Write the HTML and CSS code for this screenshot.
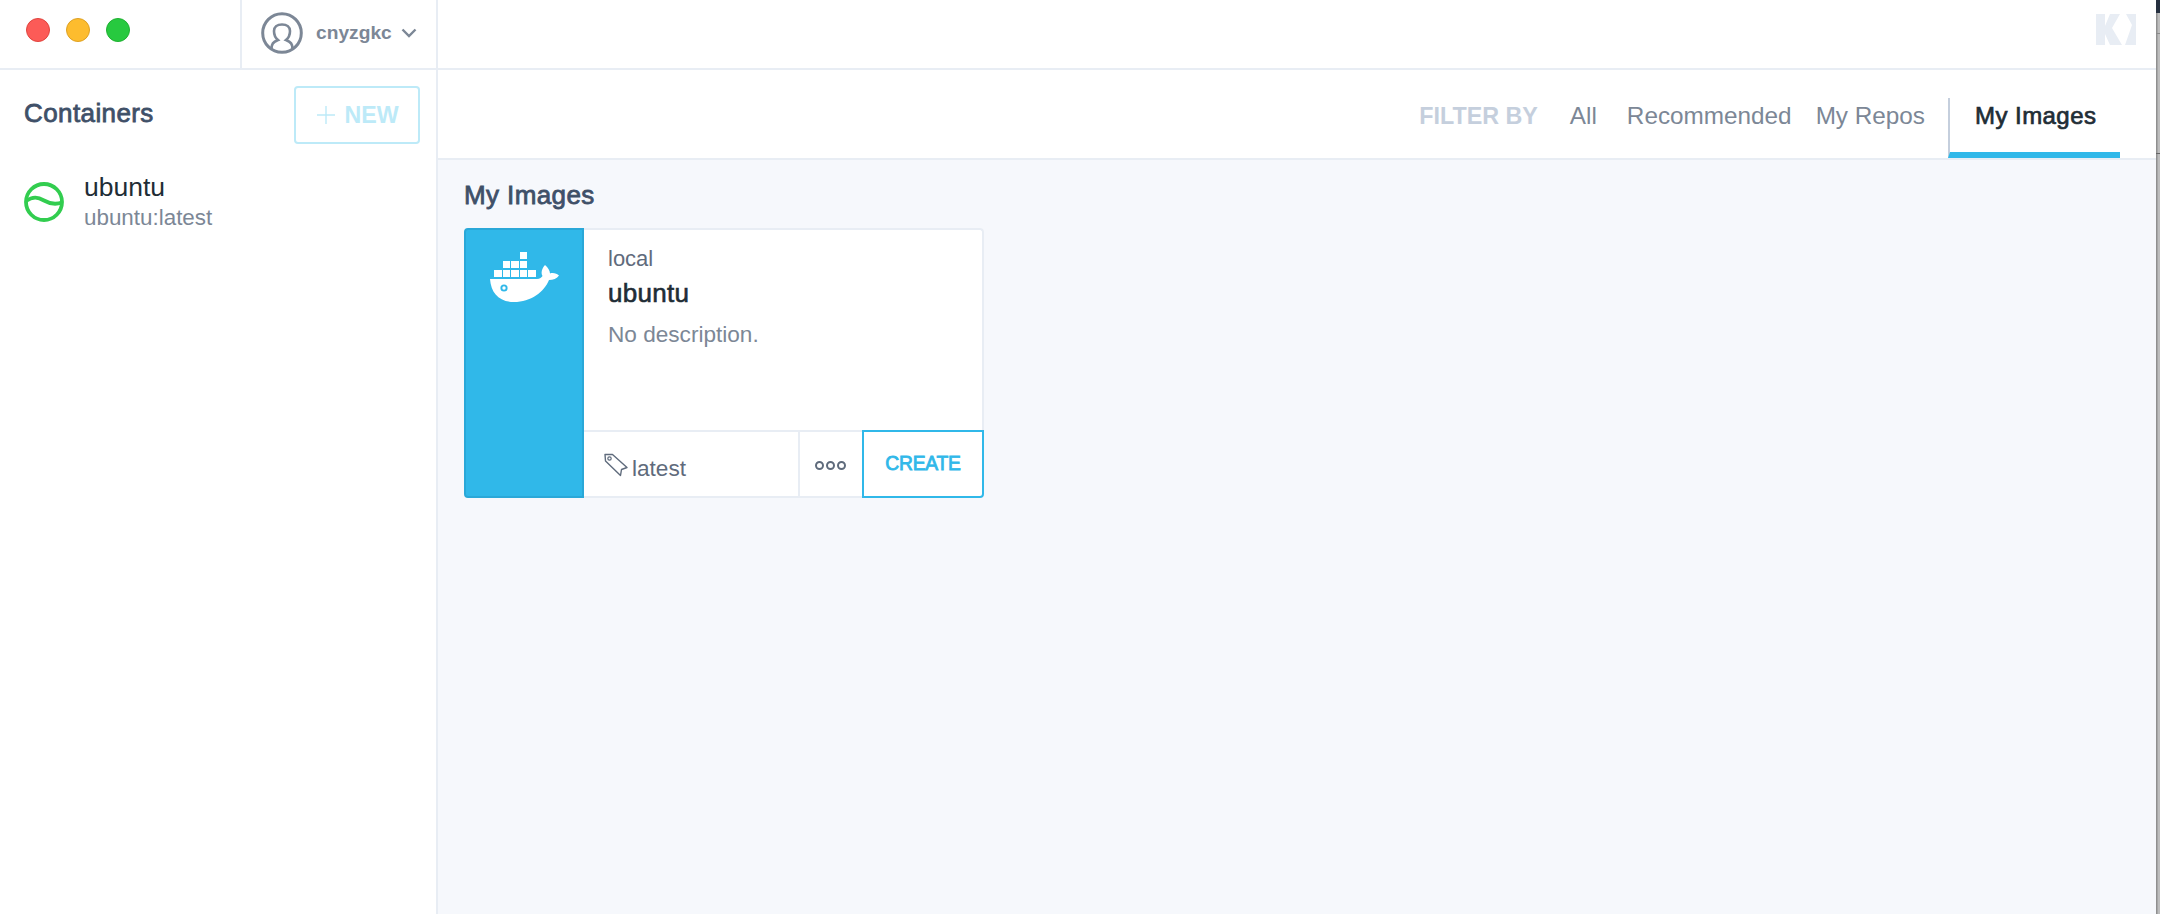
FILE: index.html
```html
<!DOCTYPE html>
<html lang="en">
<head>
<meta charset="utf-8">
<title>Kitematic</title>
<link rel="stylesheet" href="styles.css">
</head>
<body>
<div class="app">
  <header class="topbar">
    <div class="lights">
      <span class="light red"></span>
      <span class="light yellow"></span>
      <span class="light green"></span>
    </div>
    <div class="user">
      <svg class="avatar" viewBox="0 0 42 42" width="42" height="42">
        <circle cx="21" cy="21" r="19.3" fill="none" stroke="#7c8796" stroke-width="3"/>
        <path d="M10.5 37 C10.5 32 12 30 17 28 C14.5 26 13 23 13 19 C13 15 16 12.5 21 12.5 C26 12.5 29 15 29 19 C29 23 27.5 26 25 28 C30 30 31.5 32 31.5 37" fill="none" stroke="#7c8796" stroke-width="2.6"/>
      </svg>
      <span class="username">cnyzgkc</span>
      <svg class="chevron" viewBox="0 0 16 10" width="16" height="10">
        <path d="M1.5 1.5 L8 8 L14.5 1.5" fill="none" stroke="#7c8796" stroke-width="2.4"/>
      </svg>
    </div>
    <svg class="ki-logo" viewBox="0 0 40 31" width="40" height="31">
      <path d="M0 0 H9 V12 L14 0 H24 L16 14 L26 31 H14 L9 20 V31 H0 Z" fill="#e8edf4"/>
      <path d="M30 0 H40 V31 H29 L36 11 Z" fill="#e8edf4"/>
    </svg>
  </header>
  <div class="content">
    <aside class="sidebar">
      <div class="side-head">
        <h1 class="side-title">Containers</h1>
        <button class="new-btn">
          <svg viewBox="0 0 18 18" width="18" height="18">
            <path d="M9 0 V18 M0 9 H18" stroke="#bdeaf8" stroke-width="1.4" fill="none"/>
          </svg>
          <span>NEW</span>
        </button>
      </div>
      <div class="container-item">
        <svg class="status" viewBox="0 0 40 40" width="40" height="40">
          <circle cx="20" cy="20" r="18" fill="none" stroke="#32cd4f" stroke-width="3.8"/>
          <path d="M2 19 C9 14 14 15 20 18.5 C26 22 31 23 38 20.5" fill="none" stroke="#32cd4f" stroke-width="3.8"/>
        </svg>
        <div class="item-text">
          <div class="item-name">ubuntu</div>
          <div class="item-sub">ubuntu:latest</div>
        </div>
      </div>
    </aside>
    <main class="main">
      <nav class="tabs">
        <span class="filter-label">FILTER BY</span>
        <span class="tab tab-all">All</span>
        <span class="tab tab-rec">Recommended</span>
        <span class="tab tab-repos">My Repos</span>
        <span class="tab tab-active">My Images</span>
      </nav>
      <section class="results">
        <h2 class="results-title">My Images</h2>
        <article class="card">
          <div class="card-logo">
            <svg viewBox="0 0 80 60" width="80" height="60">
              <g fill="#fff">
                <rect x="36" y="5" width="7" height="7"/>
                <rect x="19" y="14" width="7" height="7"/>
                <rect x="27" y="14" width="8" height="7"/>
                <rect x="36" y="14" width="7" height="7"/>
                <rect x="10" y="23" width="8" height="7"/>
                <rect x="19" y="23" width="7" height="7"/>
                <rect x="27" y="23" width="8" height="7"/>
                <rect x="36" y="23" width="7" height="7"/>
                <rect x="44" y="23" width="8" height="7"/>
                <path d="M6 32 H53 C56 32 57.5 30.5 58.5 29 C56.5 26 58 21 61 18 C64 20.5 66 24 66 26.5 C69 25.5 73 26.5 75 28.5 C73 31.5 69 33 65 33 C60 45 47 55 30 55 C15 55 7 46 6 32 Z"/>
              </g>
              <circle cx="20" cy="41" r="3.6" fill="#30b8e9"/>
              <circle cx="20" cy="41" r="1.7" fill="#fff"/>
            </svg>
          </div>
          <div class="card-main">
            <div class="card-info">
              <div class="card-ns">local</div>
              <div class="card-name">ubuntu</div>
              <div class="card-desc">No description.</div>
            </div>
            <div class="card-foot">
              <div class="tag-cell">
                <svg viewBox="0 0 24 24" width="24" height="24">
                  <path d="M1 1.5 H8.5 L23 14.5 L17.5 16.5 L16.5 22.5 L1.5 8 Z" fill="none" stroke="#5f6b7c" stroke-width="1.4" stroke-linejoin="round"/>
                  <circle cx="5.5" cy="5.5" r="1.7" fill="none" stroke="#5f6b7c" stroke-width="1.2"/>
                </svg>
                <span class="tag-text">latest</span>
              </div>
              <div class="more-cell">
                <span class="dot"></span><span class="dot"></span><span class="dot"></span>
              </div>
              <div class="create-cell">CREATE</div>
            </div>
          </div>
        </article>
      </section>
    </main>
  </div>
  <div class="edge"></div>
</div>
</body>
</html>
```

FILE: styles.css
```css
* { box-sizing: border-box; }
html, body { margin: 0; padding: 0; }
body {
  font-family: "Liberation Sans", Arial, sans-serif;
  background: #fff;
  overflow: hidden;
}
.app {
  position: relative;
  width: 2160px;
  height: 914px;
  display: flex;
  flex-direction: column;
}
.topbar {
  height: 70px;
  flex: none;
  display: flex;
  align-items: stretch;
  border-bottom: 2px solid #e8edf4;
}
.lights {
  width: 242px;
  flex: none;
  display: flex;
  align-items: center;
  gap: 16px;
  padding: 0 0 8px 26px;
  border-right: 2px solid #e8edf4;
}
.light {
  width: 24px;
  height: 24px;
  border-radius: 50%;
  border: 1px solid;
}
.red { background: #fc5b57; border-color: #e0443e; }
.yellow { background: #fdbc2e; border-color: #dea123; }
.green { background: #27c93f; border-color: #1fb131; }
.user {
  width: 196px;
  flex: none;
  display: flex;
  align-items: center;
  padding: 0 0 2px 19px;
  border-right: 2px solid #e8edf4;
}
.avatar { flex: none; }
.username {
  margin-left: 13px;
  font-size: 19.2px;
  font-weight: 700;
  color: #7c8796;
}
.chevron { margin-left: 9px; flex: none; }
.ki-logo { margin: 14px 24px 0 auto; flex: none; }

.content { flex: 1; display: flex; min-height: 0; }
.sidebar {
  width: 438px;
  flex: none;
  border-right: 2px solid #e8edf4;
}
.side-head {
  display: flex;
  align-items: flex-start;
  justify-content: space-between;
  padding: 16px 16px 0 24px;
}
.side-title {
  margin: 12px 0 0;
  font-size: 26px;
  line-height: 30px;
  font-weight: 400;
  letter-spacing: 0.4px;
  -webkit-text-stroke: 0.8px #3f5068;
  color: #3f5068;
}
.new-btn {
  width: 126px;
  height: 58px;
  display: flex;
  align-items: center;
  justify-content: center;
  gap: 9px;
  padding: 0 0 0 2px;
  background: #fff;
  border: 2px solid #bdeaf8;
  border-radius: 4px;
  font-family: inherit;
  font-size: 23.2px;
  font-weight: 700;
  color: #bdeaf8;
}
.container-item {
  display: flex;
  align-items: center;
  gap: 20px;
  margin-top: 27px;
  padding-left: 24px;
}
.status { flex: none; }
.item-name {
  font-size: 26.5px;
  line-height: 32px;
  color: #1f2d36;
}
.item-sub {
  margin-top: 1px;
  font-size: 22.4px;
  line-height: 28px;
  color: #7c8796;
}

.main {
  flex: 1;
  min-width: 0;
  display: flex;
  flex-direction: column;
  background: #f6f8fc;
}
.tabs {
  height: 90px;
  flex: none;
  display: flex;
  align-items: stretch;
  justify-content: flex-end;
  padding: 28px 40px 0 0;
  background: #fff;
  border-bottom: 2px solid #e8edf4;
}
.filter-label {
  padding-top: 4px;
  font-size: 23.3px;
  line-height: 28px;
  font-weight: 700;
  color: #c5cfdd;
  margin-right: 32px;
}
.tab {
  padding-top: 3px;
  font-size: 24.3px;
  line-height: 30px;
  color: #7c8796;
}
.tab-all { margin-right: 30px; }
.tab-rec { margin-right: 24px; }
.tab-repos { margin-right: 23px; }
.tab-active {
  width: 172px;
  padding-left: 25px;
  font-size: 24px;
  letter-spacing: 0.45px;
  -webkit-text-stroke: 0.7px #1f2d36;
  color: #1f2d36;
  border-left: 2px solid #c5cfdd;
  border-bottom: 6px solid #30b8e9;
}

.results { padding: 19px 0 0 26px; }
.results-title {
  margin: 0 0 17px;
  font-size: 26px;
  line-height: 32px;
  font-weight: 400;
  letter-spacing: 0.4px;
  -webkit-text-stroke: 0.8px #3f5068;
  color: #3f5068;
}
.card {
  width: 520px;
  height: 270px;
  display: flex;
  background: #fff;
  border-radius: 4px;
}
.card-logo {
  width: 120px;
  flex: none;
  padding: 17px 0 0 18px;
  background: #30b8e9;
  border: 2px solid #2aa8d8;
  border-radius: 4px 0 0 4px;
}
.card-logo svg { display: block; }
.card-main {
  flex: 1;
  min-width: 0;
  display: flex;
  flex-direction: column;
}
.card-info {
  flex: 1;
  padding: 16px 0 0 24px;
  border: 2px solid #e8edf4;
  border-left: 0;
  border-bottom: 0;
  border-radius: 0 4px 0 0;
}
.card-ns {
  font-size: 22px;
  line-height: 26px;
  color: #5f6b7c;
}
.card-name {
  margin-top: 5px;
  font-size: 26px;
  line-height: 32px;
  letter-spacing: 0.3px;
  -webkit-text-stroke: 0.6px #1f2d36;
  color: #1f2d36;
}
.card-desc {
  margin-top: 12px;
  font-size: 22.6px;
  line-height: 28px;
  color: #7c8796;
}
.card-foot {
  height: 68px;
  flex: none;
  display: flex;
}
.tag-cell {
  width: 216px;
  display: flex;
  align-items: flex-start;
  gap: 4px;
  padding: 21px 0 0 20px;
  border: 2px solid #e8edf4;
  border-left: 0;
  border-right: 2px solid #e8edf4;
}
.tag-cell svg { flex: none; }
.tag-text {
  margin-top: 3px;
  font-size: 22.6px;
  line-height: 26px;
  color: #5f6b7c;
}
.more-cell {
  width: 62px;
  display: flex;
  align-items: center;
  justify-content: center;
  gap: 2px;
  padding: 2px 2px 0 0;
  border-top: 2px solid #e8edf4;
  border-bottom: 2px solid #e8edf4;
}
.dot {
  width: 9px;
  height: 9px;
  border-radius: 50%;
  border: 2px solid #5f6b7c;
}
.create-cell {
  flex: 1;
  display: flex;
  align-items: center;
  justify-content: center;
  font-size: 19.3px;
  -webkit-text-stroke: 0.8px #30b8e9;
  letter-spacing: -0.2px;
  color: #30b8e9;
  border: 2px solid #30b8e9;
  border-radius: 0 0 4px 0;
}

.edge {
  position: absolute;
  top: 0;
  right: 0;
  bottom: 0;
  width: 4px;
  background:
    linear-gradient(to bottom, #26303f 0 13px, transparent 13px),
    linear-gradient(to bottom, transparent 33px, #8a8a8a 33px 34px, transparent 34px),
    linear-gradient(to bottom, transparent 153px, #666 153px 154px, transparent 154px),
    linear-gradient(to right, #8f8f8f 0 1px, #bdbdbd 2px);
}
```
